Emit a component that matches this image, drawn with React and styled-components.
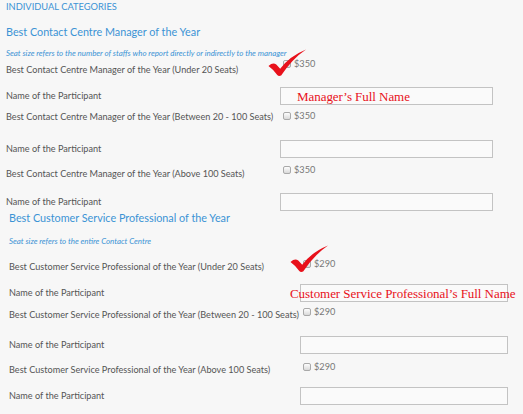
import React from 'react';
import styled, { createGlobalStyle } from 'styled-components';

const Global = createGlobalStyle`
  html, body { margin: 0; padding: 0; background: #f7f7f7; }
  body { font-family: Lato, "Open Sans", sans-serif; }
`;

const Page = styled.div`
  position: relative;
  width: 523px;
  height: 414px;
  overflow: hidden;
  background: #f7f7f7;
  display: flex;
  flex-direction: column;
`;

const CategoryTitle = styled.div`
  margin-left: 6px;
  font-size: 9.3px;
  line-height: 14px;
  color: #3b93d5;
  text-transform: uppercase;
`;

const Section = styled.section`
  display: flex;
  flex-direction: column;
  padding-left: ${(p) => p.$indent}px;
`;

const Heading = styled.h3`
  margin: ${(p) => p.$gap}px 0 0;
  font-size: 10.8px;
  line-height: 14px;
  font-weight: 400;
  color: #3b93d5;
`;

const Note = styled.p`
  margin: ${(p) => p.$gap}px 0 0;
  font-style: italic;
  font-size: 7.9px;
  line-height: 10px;
  color: #3b93d5;
  white-space: nowrap;
`;

const Row = styled.div`
  display: flex;
  align-items: center;
  height: ${(p) => p.$h}px;
  margin-top: ${(p) => p.$gap}px;
`;

const Label = styled.div`
  flex: none;
  width: ${(p) => p.$w}px;
  font-size: 9.15px;
  line-height: 12px;
  color: #555555;
  white-space: nowrap;
`;

const Price = styled.div`
  align-self: flex-start;
  display: flex;
  align-items: center;
  gap: 3px;
  margin-left: 3px;
  padding-top: ${(p) => p.$offset}px;
  font-size: 9.2px;
  line-height: 8px;
  color: #777777;
`;

const Box = styled.span`
  display: block;
  width: 8px;
  height: 8px;
  box-sizing: border-box;
  border: 1px solid #a9a9a9;
  border-radius: 2px;
  background: linear-gradient(#fdfdfd, #d9d9d9);
`;

const Field = styled.input`
  display: block;
  width: ${(p) => p.$w}px;
  height: 18px;
  box-sizing: border-box;
  margin: 0;
  padding: 0;
  border: 1px solid #c3c3c3;
  background: #fafafa;
`;

const Annotation = styled.span`
  position: absolute;
  left: ${(p) => p.$x}px;
  top: ${(p) => p.$y}px;
  font-family: "Liberation Serif", "Times New Roman", serif;
  font-size: 13px;
  line-height: 13px;
  letter-spacing: -0.05px;
  color: #e8111b;
  white-space: nowrap;
  pointer-events: none;
`;

const TickWrap = styled.svg`
  position: absolute;
  left: ${(p) => p.$x}px;
  top: ${(p) => p.$y}px;
  pointer-events: none;
`;

const Tick = ({ x, y }) => (
  <TickWrap $x={x} $y={y} width="39" height="27" viewBox="0 0 40 28" preserveAspectRatio="none">
    <path
      d="M0.5,17.5 Q5,13.5 8.5,16 L12.5,20.5 Q22,7.5 39,0.5 Q25,10 13.5,27.5 Q11,28.5 9.5,27 Q6,21.5 0.5,17.5 Z"
      fill="#e8111b"
    />
  </TickWrap>
);

const sections = [
  {
    indent: 6,
    title: 'Best Contact Centre Manager of the Year',
    titleGap: 11,
    note: 'Seat size refers to the number of staffs who report directly or indirectly to the manager',
    noteGap: 9,
    labelW: 274,
    fieldW: 213,
    price: '$350',
    rows: [
      { kind: 'label', text: 'Best Contact Centre Manager of the Year (Under 20 Seats)', gap: 2, offset: 0 },
      { kind: 'name', gap: 7 },
      { kind: 'label', text: 'Best Contact Centre Manager of the Year (Between 20 - 100 Seats)', gap: 2, offset: 5 },
      { kind: 'name', gap: 13 },
      { kind: 'label', text: 'Best Contact Centre Manager of the Year (Above 100 Seats)', gap: 6, offset: 2 },
      { kind: 'name', gap: 9 },
    ],
  },
  {
    indent: 9,
    title: 'Best Customer Service Professional of the Year',
    titleGap: 0,
    note: 'Seat size refers to the entire Contact Centre',
    noteGap: 11,
    labelW: 291,
    fieldW: 208,
    price: '$290',
    rows: [
      { kind: 'label', text: 'Best Customer Service Professional of the Year (Under 20 Seats)', gap: 11, offset: 3 },
      { kind: 'name', gap: 7 },
      { kind: 'label', text: 'Best Customer Service Professional of the Year (Between 20 - 100 Seats)', gap: 3, offset: 3 },
      { kind: 'name', gap: 11 },
      { kind: 'label', text: 'Best Customer Service Professional of the Year (Above 100 Seats)', gap: 6, offset: 3 },
      { kind: 'name', gap: 7 },
    ],
  },
];

export default function App() {
  return (
    <Page>
      <Global />
      <CategoryTitle>Individual Categories</CategoryTitle>
      {sections.map((s) => (
        <Section key={s.title} $indent={s.indent}>
          <Heading $gap={s.titleGap}>{s.title}</Heading>
          <Note $gap={s.noteGap}>{s.note}</Note>
          {s.rows.map((r, i) =>
            r.kind === 'label' ? (
              <Row key={i} $h={20} $gap={r.gap}>
                <Label $w={s.labelW}>{r.text}</Label>
                <Price $offset={r.offset}>
                  <Box />
                  <span>{s.price}</span>
                </Price>
              </Row>
            ) : (
              <Row key={i} $h={18} $gap={r.gap}>
                <Label $w={s.labelW}>Name of the Participant</Label>
                <Field type="text" $w={s.fieldW} />
              </Row>
            )
          )}
        </Section>
      ))}
      <Tick x={268} y={49} />
      <Tick x={290} y={245} />
      <Annotation $x={297} $y={90}>Manager’s Full Name</Annotation>
      <Annotation $x={290} $y={287}>Customer Service Professional’s Full Name</Annotation>
    </Page>
  );
}
